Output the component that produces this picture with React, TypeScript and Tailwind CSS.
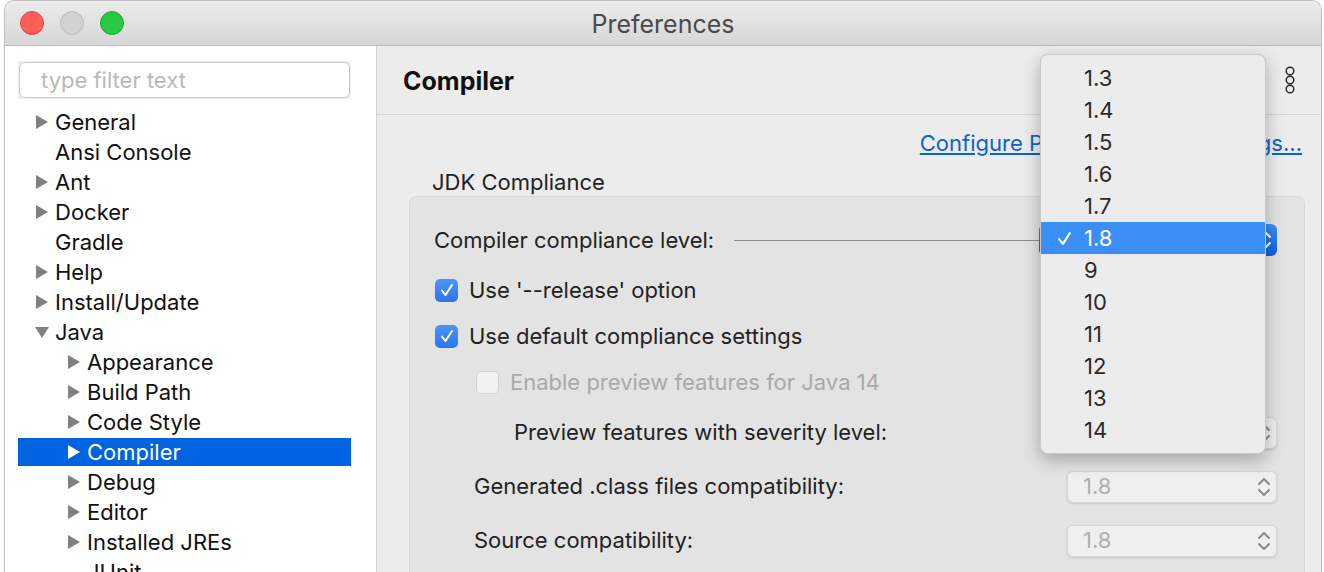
import React from 'react';

const Tri = ({ open, white }: { open?: boolean; white?: boolean }) => (
  <svg width="14" height="14" viewBox="0 0 14 14" className="shrink-0">
    {open ? (
      <polygon points="0,2 14,2 7,13" fill={white ? '#fff' : '#808080'} />
    ) : (
      <polygon points="1,0 13,7 1,14" fill={white ? '#fff' : '#808080'} />
    )}
  </svg>
);

const Chevrons = ({ color }: { color: string }) => (
  <svg width="14" height="24" viewBox="0 0 14 24" fill="none" stroke={color} strokeWidth="2" strokeLinecap="round" strokeLinejoin="round">
    <polyline points="2,9 7,4 12,9" />
    <polyline points="2,15 7,20 12,15" />
  </svg>
);

const Check = ({ color = '#fff', w = 14 }: { color?: string; w?: number }) => (
  <svg width={w} height={w} viewBox="0 0 14 14" fill="none" stroke={color} strokeWidth="2" strokeLinecap="round" strokeLinejoin="round">
    <polyline points="2,7.5 5.5,12 12,2" />
  </svg>
);

type Node = { label: string; level: number; arrow?: 'right' | 'down'; selected?: boolean };

const tree: Node[] = [
  { label: 'General', level: 0, arrow: 'right' },
  { label: 'Ansi Console', level: 0 },
  { label: 'Ant', level: 0, arrow: 'right' },
  { label: 'Docker', level: 0, arrow: 'right' },
  { label: 'Gradle', level: 0 },
  { label: 'Help', level: 0, arrow: 'right' },
  { label: 'Install/Update', level: 0, arrow: 'right' },
  { label: 'Java', level: 0, arrow: 'down' },
  { label: 'Appearance', level: 1, arrow: 'right' },
  { label: 'Build Path', level: 1, arrow: 'right' },
  { label: 'Code Style', level: 1, arrow: 'right' },
  { label: 'Compiler', level: 1, arrow: 'right', selected: true },
  { label: 'Debug', level: 1, arrow: 'right' },
  { label: 'Editor', level: 1, arrow: 'right' },
  { label: 'Installed JREs', level: 1, arrow: 'right' },
  { label: 'JUnit', level: 1 },
];

const versions = ['1.3', '1.4', '1.5', '1.6', '1.7', '1.8', '9', '10', '11', '12', '13', '14'];

const GrayCombo = () => (
  <div className="w-[210px] h-[32px] rounded-[6px] bg-[#efefef] border border-[#d6d6d6] shadow-sm flex items-center justify-between pl-[15px] pr-[5px] text-[22px] text-[#b0b0b0]">
    <span>1.8</span>
    <Chevrons color="#8a8a8a" />
  </div>
);

export default function App() {
  return (
    <div className="w-[1324px] h-[572px] overflow-hidden bg-white flex font-['Inter','Noto_Sans',sans-serif] relative">
      <div className="w-[4px] shrink-0 bg-white" />
      <div className="w-[1318px] shrink-0 flex flex-col rounded-tl-[10px] rounded-tr-[10px] border-l border-r border-t border-[#bdbdbd] overflow-hidden">
        {/* title bar */}
        <div className="h-[45px] shrink-0 relative flex items-center bg-gradient-to-b from-[#ececec] to-[#d6d6d6] border-b border-[#bcbcbc]">
          <div className="flex gap-[16px] pl-[15px]">
            <span className="w-[24px] h-[24px] rounded-full bg-[#fe5f57] border border-[#e0443e]" />
            <span className="w-[24px] h-[24px] rounded-full bg-[#d1d1d1] border border-[#bdbdbd]" />
            <span className="w-[24px] h-[24px] rounded-full bg-[#28c840] border border-[#1daa2f]" />
          </div>
          <div className="absolute inset-0 pt-[3px] flex items-center justify-center text-[25px] text-[#4a4a4a] pointer-events-none">Preferences</div>
        </div>

        <div className="flex flex-1 min-h-0">
          {/* left tree */}
          <div className="w-[372px] shrink-0 bg-white border-r border-[#d4d4d4]">
            <div className="ml-[13px] mr-[25px] mt-[15px] bg-[#f0f0f0] p-px">
              <div className="h-[36px] rounded-[6px] border border-[#c9c9c9] bg-white flex items-center pl-[21px] text-[22px] text-[#b9b9b9]">
                type filter text
              </div>
            </div>
            <div className="mt-[8px] ml-[13px] mr-[25px]">
              {tree.map((n) => (
                <div key={n.label} className="h-[30px] py-px">
                  <div
                    className={`h-[28px] flex items-center text-[22px] ${n.selected ? 'bg-[#0064e1] text-white' : 'text-[#111]'}`}
                    style={{ paddingLeft: 17 + n.level * 32 }}
                  >
                    {n.arrow ? <Tri open={n.arrow === 'down'} white={n.selected} /> : <span className="w-[14px] shrink-0" />}
                    <span className="ml-[6px]">{n.label}</span>
                  </div>
                </div>
              ))}
            </div>
          </div>

          {/* right page */}
          <div className="flex-1 bg-[#ececec] flex flex-col">
            <div className="h-[69px] shrink-0 border-b border-[#d6d6d6] flex items-center justify-between pl-[26px] pr-[26px]">
              <span className="text-[25px] font-bold text-[#111] pt-[4px]">Compiler</span>
              <svg width="10" height="28" viewBox="0 0 10 28" fill="none" stroke="#222" strokeWidth="1.4">
                <circle cx="5" cy="5" r="3.8" />
                <circle cx="5" cy="14" r="3.8" />
                <circle cx="5" cy="23" r="3.8" />
              </svg>
            </div>

            <div className="mt-[16px] h-[24px] flex items-center justify-end pr-[19px]">
              <span className="text-[22px] leading-[24px] text-[#0a63d0] underline underline-offset-2">Configure Project Specific Settings...</span>
            </div>

            <div className="mt-[15px] h-[24px] pl-[55px] text-[22px] text-[#222] flex items-center">JDK Compliance</div>

            <div className="mt-[2px] ml-[32px] mr-[16px] flex-1 rounded-t-[8px] bg-[#e3e3e3] border border-b-0 border-[#d8d8d8] text-[22px] text-[#222]">
              <div className="mt-[28px] h-[30px] flex items-center pl-[24px] pr-[27px]">
                <span>Compiler compliance level:</span>
                <div className="flex-1 h-px bg-[#8c8c8c] ml-[20px]" />
                <div className="w-[238px] h-[32px] rounded-[6px] bg-gradient-to-b from-[#3f8ff7] to-[#0a5ee0] flex items-center justify-between pl-[15px] pr-[5px] text-white">
                  <span>1.8</span>
                  <Chevrons color="#fff" />
                </div>
              </div>

              <div className="mt-[23px] h-[24px] flex items-center pl-[25px]">
                <span className="w-[23px] h-[23px] rounded-[5px] bg-gradient-to-b from-[#4c96f9] to-[#2b74ee] flex items-center justify-center">
                  <Check />
                </span>
                <span className="ml-[11px]">Use '--release' option</span>
              </div>

              <div className="mt-[22px] h-[24px] flex items-center pl-[25px]">
                <span className="w-[23px] h-[23px] rounded-[5px] bg-gradient-to-b from-[#4c96f9] to-[#2b74ee] flex items-center justify-center">
                  <Check />
                </span>
                <span className="ml-[11px]">Use default compliance settings</span>
              </div>

              <div className="mt-[22px] h-[24px] flex items-center pl-[66px]">
                <span className="w-[23px] h-[23px] rounded-[5px] bg-[#f2f2f2] border border-[#d2d2d2]" />
                <span className="ml-[11px] text-[#a9a9a9]">Enable preview features for Java 14</span>
              </div>

              <div className="mt-[22px] h-[33px] flex items-center justify-between pl-[104px] pr-[27px]">
                <span>Preview features with severity level:</span>
                <GrayCombo />
              </div>

              <div className="mt-[21px] h-[33px] flex items-center justify-between pl-[64px] pr-[27px]">
                <span>Generated .class files compatibility:</span>
                <GrayCombo />
              </div>

              <div className="mt-[21px] h-[33px] flex items-center justify-between pl-[64px] pr-[27px]">
                <span>Source compatibility:</span>
                <GrayCombo />
              </div>
            </div>
          </div>
        </div>
      </div>

      {/* popup menu of the compliance combo */}
      <div className="absolute left-[1040px] top-[54px] w-[226px] h-[400px] rounded-[8px] bg-[#ececed] border border-[#c8c8c8] shadow-[0_6px_18px_rgba(0,0,0,0.28)] pt-[7px]">
        {versions.map((v) => (
          <div
            key={v}
            className={`h-[32px] flex items-center text-[22px] ${v === '1.8' ? 'bg-[#3a8ef6] text-white' : 'text-[#2a2a2a]'}`}
          >
            <span className="w-[43px] flex justify-center pl-[4px]">{v === '1.8' ? <Check w={15} /> : null}</span>
            <span>{v}</span>
          </div>
        ))}
      </div>
    </div>
  );
}
